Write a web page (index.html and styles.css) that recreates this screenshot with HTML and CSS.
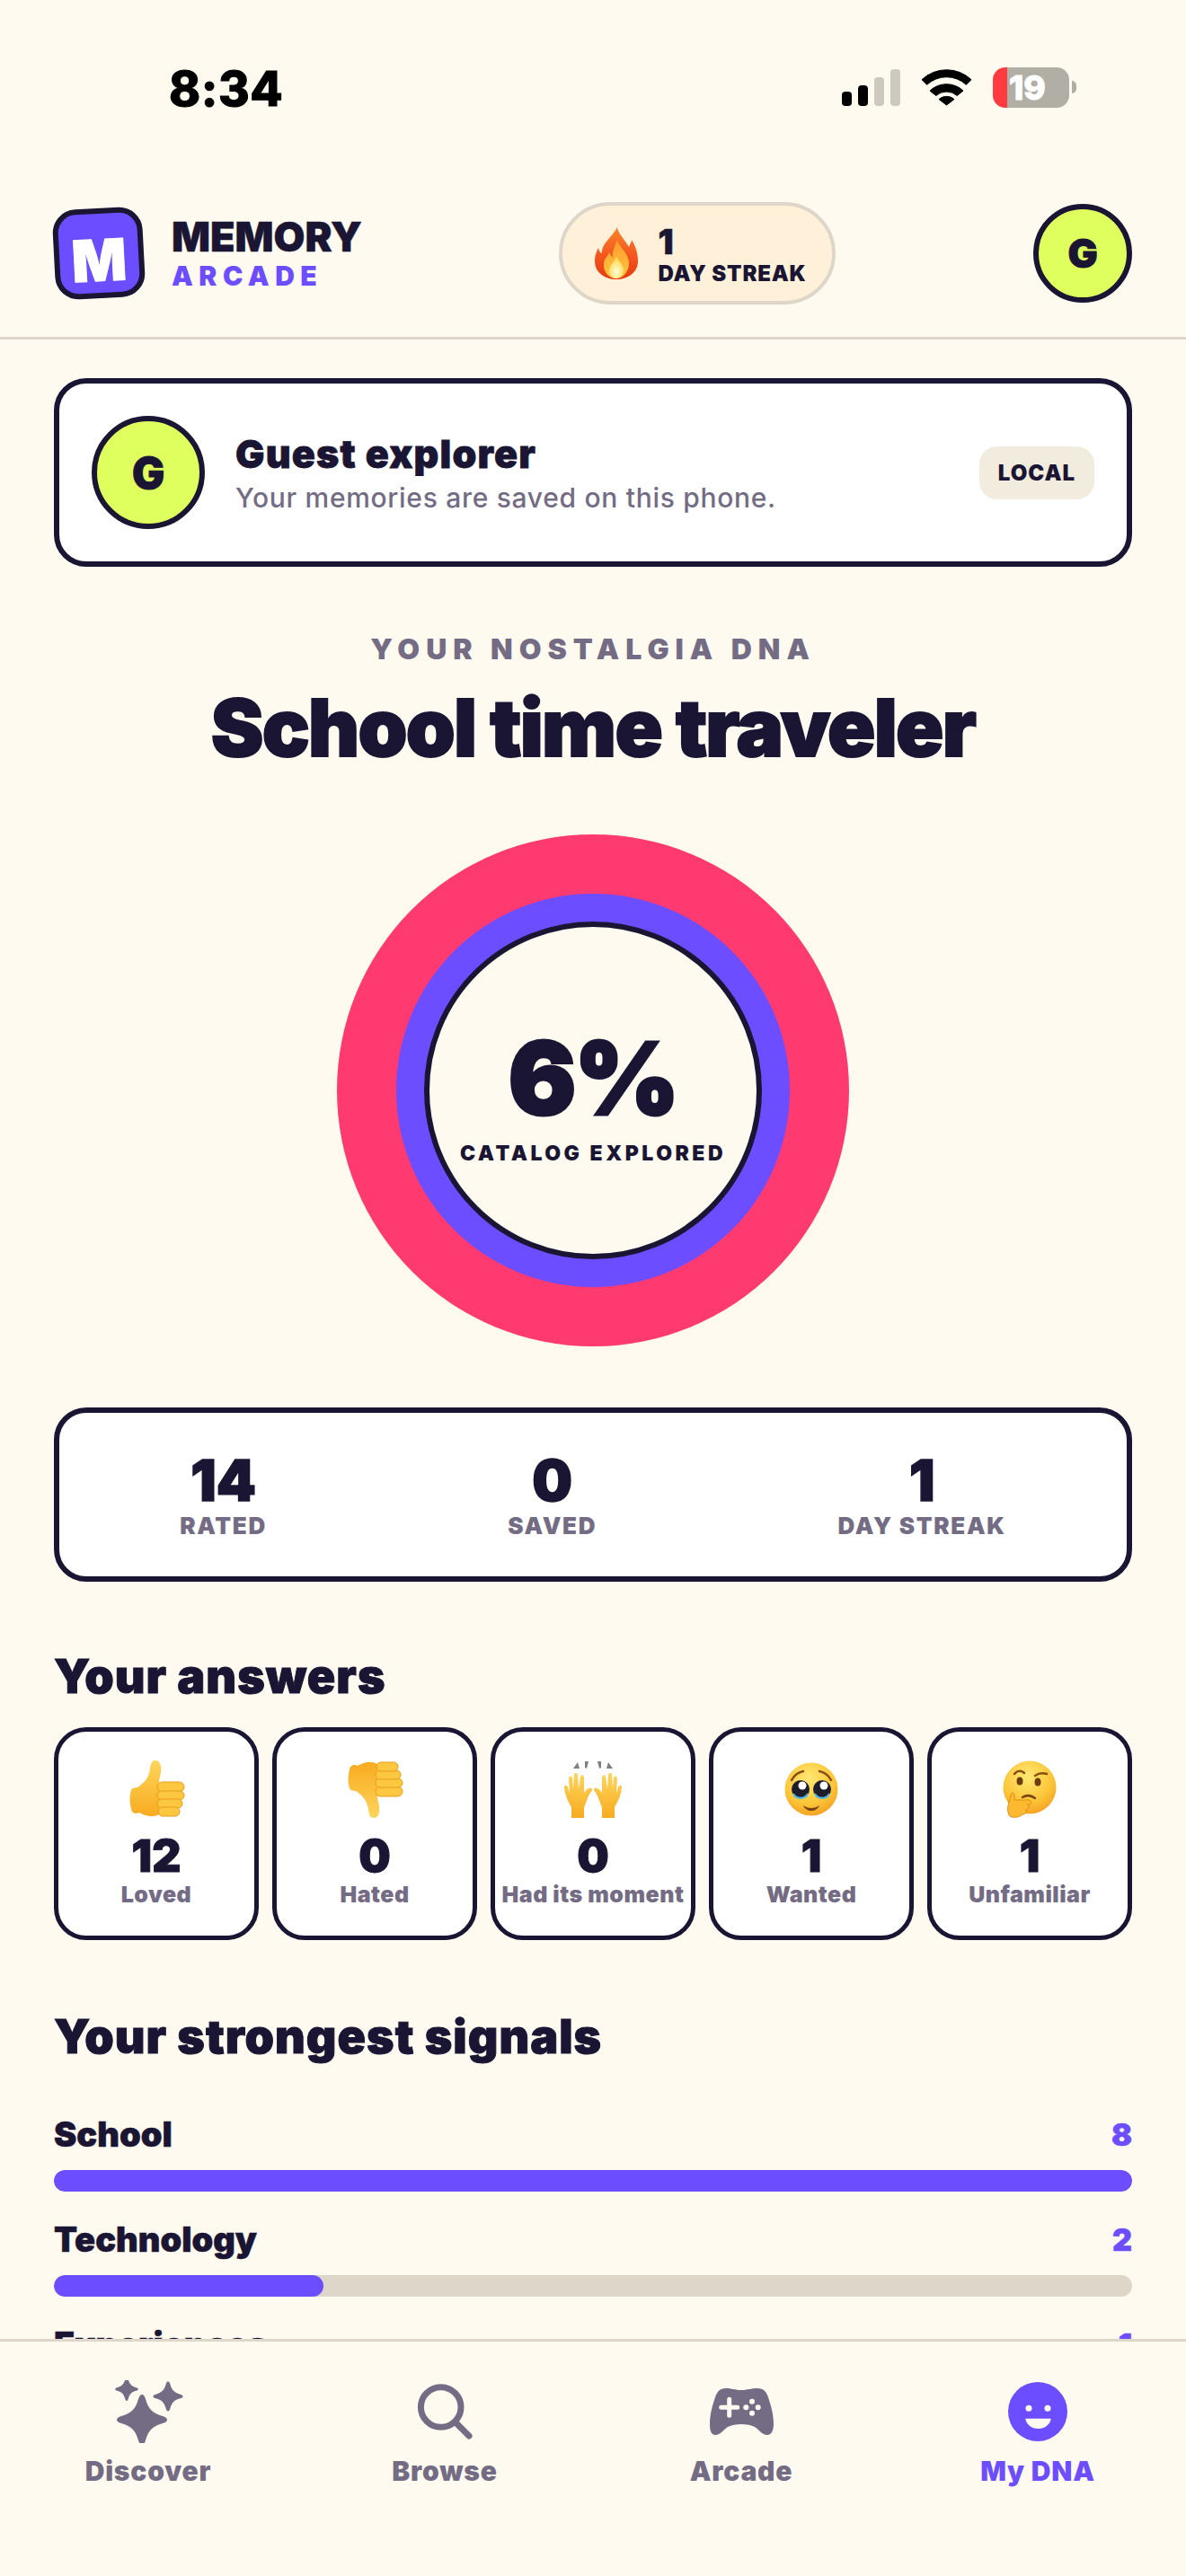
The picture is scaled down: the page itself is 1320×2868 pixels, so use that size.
FILE: index.html
```html
<!DOCTYPE html>
<html lang="en">
<head>
  <meta charset="UTF-8" />
  <meta name="viewport" content="width=device-width, initial-scale=1" />
  <title>Memory Arcade - My DNA</title>
  <link rel="stylesheet" href="styles.css">
</head>
<body>
  <svg class="defs" aria-hidden="true">
    <defs>
      <linearGradient id="skin" x1="0" y1="0" x2="0" y2="1">
        <stop offset="0" stop-color="#ffd55c"/>
        <stop offset="1" stop-color="#f7ab1f"/>
      </linearGradient>
      <radialGradient id="face" cx="0.45" cy="0.3" r="0.8">
        <stop offset="0" stop-color="#ffe873"/>
        <stop offset="0.6" stop-color="#fcc537"/>
        <stop offset="1" stop-color="#f3941c"/>
      </radialGradient>
      <linearGradient id="flame" x1="0" y1="0" x2="0" y2="1">
        <stop offset="0" stop-color="#f9852a"/>
        <stop offset="0.6" stop-color="#f4511e"/>
        <stop offset="1" stop-color="#e8380f"/>
      </linearGradient>
      <linearGradient id="flameIn" x1="0" y1="0" x2="0" y2="1">
        <stop offset="0" stop-color="#ff9a2e"/>
        <stop offset="1" stop-color="#ffc83c"/>
      </linearGradient>
      <radialGradient id="flameCore" cx="0.5" cy="0.7" r="0.6">
        <stop offset="0" stop-color="#fffde0"/>
        <stop offset="1" stop-color="#ffd94a"/>
      </radialGradient>
      <g id="thumb">
        <path fill="url(#skin)" d="M31 0C36 0 38 6 37 13C36 18 35 22 35 25L35 60C28 64 20 62 13 58C9 60 5 59 4 54C2 46 2 39 4 33C5 31 7 30 11 30C17 26 24 20 25 9C26 3 27 0 31 0Z"/>
        <g fill="#fdc83f" stroke="#e99a1a" stroke-width="1">
          <rect x="33" y="24" width="30" height="11" rx="5.5"/>
          <rect x="33" y="34" width="30" height="10" rx="5"/>
          <rect x="33" y="43" width="28" height="10" rx="5"/>
          <rect x="34" y="52" width="24" height="10" rx="5"/>
        </g>
      </g>
    </defs>
  </svg>

  <div class="phone">
    <div class="statusbar">
      <div class="time">8:34</div>
      <div class="status-icons">
        <svg class="signal" width="65" height="41" viewBox="0 0 65 41">
          <rect x="0" y="25" width="11" height="16" rx="4" fill="#000"/>
          <rect x="18" y="18" width="11" height="23" rx="4" fill="#000"/>
          <rect x="36" y="9" width="11" height="32" rx="4" fill="#cdc9c0"/>
          <rect x="54" y="0" width="11" height="41" rx="4" fill="#cdc9c0"/>
        </svg>
        <svg class="wifi" width="57" height="42" viewBox="0 0 57 42">
          <g fill="#000" stroke="#000" stroke-width="1" stroke-linejoin="round">
            <path d="M1 12.7A40 40 0 0 1 56 12.7L50.3 18.3A32 32 0 0 0 6.7 18.3Z"/>
            <path d="M10 25A27 27 0 0 1 47 25L40.3 30.5A18 18 0 0 0 16.7 30.5Z"/>
            <path d="M20 34.5A13 13 0 0 1 37 34.5L28.5 41Z"/>
          </g>
        </svg>
        <div class="battery">
          <div class="battery-body">19</div>
          <div class="battery-nub"></div>
        </div>
      </div>
    </div>

    <header class="topbar">
      <div class="brand">
        <div class="logo"><span>M</span></div>
        <div class="brand-text">
          <div class="brand-name">MEMORY</div>
          <div class="brand-sub">ARCADE</div>
        </div>
      </div>
      <div class="streak-pill">
        <svg class="fire" width="48" height="58" viewBox="0 0 48 58">
          <path fill="url(#flame)" d="M25 0C27 9 33 13 38 22C40 17 41 16 41 14C46 22 48 30 48 38C48 50 37 58 24 58C11 58 0 50 0 38C0 31 2 27 4 23C5 27 6 28 8 29C7 18 19 12 25 0Z"/>
          <path fill="url(#flameIn)" d="M25 14C27 22 36 27 38 38C39 48 32 57 24 57C15 57 9 49 10 40C11 34 14 33 16 28C18 32 19 33 20 33C19 26 23 20 25 14Z"/>
          <path fill="url(#flameCore)" d="M24 32C26 38 32 41 32 48C32 53 28 57 24 57C19 57 16 53 16 48C16 42 22 39 24 32Z"/>
        </svg>
        <div class="streak-text">
          <div class="streak-num">1</div>
          <div class="streak-label">DAY STREAK</div>
        </div>
      </div>
      <div class="avatar avatar-small">G</div>
    </header>

    <main class="content">
      <section class="guest-card">
        <div class="avatar avatar-large">G</div>
        <div class="guest-text">
          <div class="guest-name">Guest explorer</div>
          <div class="guest-sub">Your memories are saved on this phone.</div>
        </div>
        <div class="local-chip">LOCAL</div>
      </section>

      <div class="eyebrow">YOUR NOSTALGIA DNA</div>
      <h1 class="dna-title">School time traveler</h1>

      <div class="donut">
        <div class="donut-mid">
          <div class="donut-core">
            <div class="donut-pct">6%</div>
            <div class="donut-label">CATALOG EXPLORED</div>
          </div>
        </div>
      </div>

      <section class="stats-card">
        <div class="stat"><div class="stat-num">14</div><div class="stat-label">RATED</div></div>
        <div class="stat"><div class="stat-num">0</div><div class="stat-label">SAVED</div></div>
        <div class="stat"><div class="stat-num">1</div><div class="stat-label">DAY STREAK</div></div>
      </section>

      <h2 class="section-title answers-title">Your answers</h2>
      <section class="answers">
        <div class="answer">
          <svg class="emoji" width="64" height="64" viewBox="0 0 64 64">
            <use href="#thumb"/>
          </svg>
          <div class="answer-num">12</div>
          <div class="answer-label">Loved</div>
        </div>
        <div class="answer">
          <svg class="emoji" width="64" height="64" viewBox="0 0 64 64">
            <use href="#thumb" transform="matrix(1 0 0 -1 0 64)"/>
          </svg>
          <div class="answer-num">0</div>
          <div class="answer-label">Hated</div>
        </div>
        <div class="answer">
          <svg class="emoji" width="70" height="64" viewBox="0 0 70 64">
            <g fill="#7f7f7f">
              <path d="M13 9L20 9L18 2Z"/><path d="M26 1L30 1L28 9L26 8Z"/>
              <path d="M40 1L44 1L44 8L42 9Z"/><path d="M50 9L57 9L52 2Z"/>
            </g>
            <g fill="url(#skin)">
              <path id="hand" d="M11 64L11 52C8 47 4 40 3 30C2.500 27 6 27 7 30L9 37L8 20C8 17 12 17 12 20L13 32L14 16C14 13 18 13 18 16L19 32L21 18C21 15 25 16 25 19L25 36C27 33 30 30 33 31C35 32 34 34 32 36C29 40 28 46 25 52L25 64Z"/>
              <use href="#hand" transform="matrix(-1 0 0 1 70 0)"/>
            </g>
          </svg>
          <div class="answer-num">0</div>
          <div class="answer-label">Had its moment</div>
        </div>
        <div class="answer">
          <svg class="emoji" width="64" height="64" viewBox="0 0 64 64">
            <circle cx="32" cy="32" r="29.500" fill="url(#face)"/>
            <path d="M10 22C13 16 18 13 23 12M54 22C51 16 46 13 41 12" fill="none" stroke="#8a4f10" stroke-width="2.500" stroke-linecap="round"/>
            <circle cx="20" cy="32" r="10" fill="#1d1d2b"/>
            <circle cx="44" cy="32" r="10" fill="#1d1d2b"/>
            <circle cx="22" cy="28" r="4.500" fill="#fff"/>
            <circle cx="46" cy="28" r="4.500" fill="#fff"/>
            <path d="M12 37C16 43 24 43 28 37C27 44 13 44 12 37ZM36 37C40 43 48 43 52 37C51 44 37 44 36 37Z" fill="#4cb3ea" stroke="#4cb3ea" stroke-width="1.500"/>
            <path d="M23 50C28 54 36 54 41 50C38 58 26 58 23 50Z" fill="#7a4410"/>
          </svg>
          <div class="answer-num">1</div>
          <div class="answer-label">Wanted</div>
        </div>
        <div class="answer">
          <svg class="emoji" width="64" height="64" viewBox="0 0 64 64">
            <circle cx="32" cy="30" r="29.500" fill="url(#face)"/>
            <path d="M15 15C18 11 23 11 26 14M38 17C42 14 47 14 51 15" fill="none" stroke="#8a4f10" stroke-width="2.500" stroke-linecap="round"/>
            <ellipse cx="21" cy="23" rx="3.500" ry="4.500" fill="#6d3c0c"/>
            <ellipse cx="41" cy="24" rx="3.500" ry="4.500" fill="#6d3c0c"/>
            <path d="M24 41C29 38 34 39 38 42" fill="none" stroke="#7a4410" stroke-width="2.500" stroke-linecap="round"/>
            <path fill="#fdb92f" stroke="#e08d14" stroke-width="1" d="M10 62C7 58 7 52 9 47L11 38C12 35 15 36 15 39L15 44L30 44C35 44 35 49 31 49L29 49C32 50 32 54 28 55C29 58 27 60 24 60C20 64 13 64 10 62Z"/>
          </svg>
          <div class="answer-num">1</div>
          <div class="answer-label">Unfamiliar</div>
        </div>
      </section>

      <h2 class="section-title signals-title">Your strongest signals</h2>
      <section class="signals">
        <div class="signal-row">
          <div class="signal-head"><span class="signal-name">School</span><span class="signal-val">8</span></div>
          <div class="track"><div class="fill" style="width:100%"></div></div>
        </div>
        <div class="signal-row">
          <div class="signal-head"><span class="signal-name">Technology</span><span class="signal-val">2</span></div>
          <div class="track"><div class="fill" style="width:25%"></div></div>
        </div>
        <div class="signal-row">
          <div class="signal-head"><span class="signal-name">Experiences</span><span class="signal-val">1</span></div>
          <div class="track"><div class="fill" style="width:12.5%"></div></div>
        </div>
      </section>
    </main>

    <nav class="tabbar">
      <div class="tab">
        <svg class="tab-icon" width="80" height="70" viewBox="0 0 80 70">
          <defs>
            <path id="star" d="M0-28C2-28 3-26 4-23C7-12 12-7 23-4C26-3 28-2 28 0C28 2 26 3 23 4C12 7 7 12 4 23C3 26 2 28 0 28C-2 28-3 26-4 23C-7 12-12 7-23 4C-26 3-28 2-28 0C-28-2-26-3-23-4C-12-7-7-12-4-23C-3-26-2-28 0-28Z"/>
          </defs>
          <use href="#star" transform="translate(33 44)"/>
          <use href="#star" transform="translate(16 10) scale(.46)"/>
          <use href="#star" transform="translate(62 18) scale(.59)"/>
        </svg>
        <div class="tab-label">Discover</div>
      </div>
      <div class="tab">
        <svg class="tab-icon" width="80" height="70" viewBox="0 0 80 70">
          <circle cx="35.700" cy="30" r="22.300" fill="none" stroke="currentColor" stroke-width="7"/>
          <path d="M52 47L67 62" fill="none" stroke="currentColor" stroke-width="7" stroke-linecap="round"/>
        </svg>
        <div class="tab-label">Browse</div>
      </div>
      <div class="tab">
        <svg class="tab-icon" width="80" height="70" viewBox="0 0 80 70">
          <path d="M23 9C29 9 33 11 40 11C47 11 51 9 58 9C65 9 68 13 70 19C73 28 76 38 76 49C76 57 73 61 69 61C63 61 60 55 55 52C51 50 46 49 40 49C34 49 29 50 25 52C20 55 17 61 11 61C7 61 5 57 5 49C5 38 8 28 11 19C13 13 16 9 23 9Z"/>
          <path d="M17.700 30.300H35.700M26.700 21.300V39.300" fill="none" stroke="#fffaef" stroke-width="5" stroke-linecap="round"/>
          <g fill="#fffaef">
            <circle cx="52" cy="23.700" r="3"/><circle cx="45.300" cy="30.300" r="3"/>
            <circle cx="58.700" cy="30.300" r="3"/><circle cx="52" cy="36.700" r="3"/>
          </g>
        </svg>
        <div class="tab-label">Arcade</div>
      </div>
      <div class="tab tab-active">
        <svg class="tab-icon" width="80" height="70" viewBox="0 0 80 70">
          <circle cx="40" cy="35" r="33"/>
          <circle cx="30" cy="31.300" r="3.500" fill="#fffaef"/>
          <circle cx="51" cy="31.300" r="3.500" fill="#fffaef"/>
          <path d="M26.300 42.700H54.700C54 49 48 54 40.500 54C33 54 27 49 26.300 42.700Z" fill="#fffaef"/>
        </svg>
        <div class="tab-label">My DNA</div>
      </div>
    </nav>
  </div>
</body>
</html>
```

FILE: styles.css
```css
* { box-sizing: border-box; }
html, body {
  margin: 0; padding: 0;
  background-color: #fffaef;
}
body {
  color: #1a1533;
  font-family: Inter, 'Liberation Sans', sans-serif;
}
.defs { display: block; width: 0; height: 0; }
.phone {
  width: 1320px;
  height: 2868px;
  display: flex;
  flex-direction: column;
  overflow: hidden;
}

/* status bar */
.statusbar {
  height: 188px;
  flex: none;
  padding: 72px 122px 0 188px;
  display: flex;
  justify-content: space-between;
  align-items: flex-start;
}
.time {
  margin-top: 2px;
  font-size: 53px;
  line-height: 50px;
  font-weight: 800;
  letter-spacing: 0.5px;
  -webkit-text-stroke: 1px;
  color: #000;
}
.status-icons {
  display: flex;
  align-items: center;
  gap: 23px;
  height: 50px;
}
.battery { display: flex; align-items: center; gap: 3px; }
.battery-body {
  width: 85px;
  height: 45px;
  border-radius: 14px;
  background: linear-gradient(90deg, #ff3b3f 16px, #b1aea6 16px);
  color: #fff;
  font-size: 37px;
  font-weight: 800;
  line-height: 45px;
  padding-left: 18px;
  -webkit-text-stroke: 1px;
}
.battery-nub {
  width: 5px;
  height: 14px;
  border-radius: 0 5px 5px 0;
  background-color: #b1aea6;
}

/* header */
.topbar {
  height: 190px;
  flex: none;
  padding: 0 60px;
  display: flex;
  justify-content: space-between;
  align-items: center;
  border-bottom: 3px solid #ded6c8;
}
.brand { display: flex; align-items: center; gap: 31px; }
.logo {
  width: 100px;
  height: 100px;
  border: 6px solid #1a1533;
  border-radius: 26px;
  background-color: #6c4dff;
  transform: rotate(-3deg);
  display: flex;
  align-items: center;
  justify-content: center;
  color: #fff;
  font-size: 64px;
  font-weight: 900;
  -webkit-text-stroke: 1px;
}
.logo span { position: relative; top: 7px; }
.brand-name {
  font-size: 45px;
  line-height: 50px;
  font-weight: 900;
  -webkit-text-stroke: 0.5px;
}
.brand-sub {
  font-size: 30px;
  line-height: 36px;
  font-weight: 900;
  letter-spacing: 6.5px;
  color: #6c4dff;
}
.streak-pill {
  width: 308px;
  height: 114px;
  padding-left: 36px;
  display: flex;
  align-items: center;
  gap: 22px;
  background-color: #fff1d9;
  border: 4px solid #ded6c8;
  border-radius: 57px;
}
.streak-text { margin-top: 5px; }
.streak-num {
  font-size: 38px;
  line-height: 42px;
  font-weight: 900;
  -webkit-text-stroke: 0.5px;
}
.streak-label {
  font-size: 24px;
  line-height: 30px;
  font-weight: 900;
  letter-spacing: 0.8px;
}
.avatar {
  flex: none;
  display: flex;
  align-items: center;
  justify-content: center;
  background-color: #dfff5f;
  border-radius: 50%;
  font-weight: 900;
  -webkit-text-stroke: 1px;
}
.avatar-small {
  width: 110px;
  height: 110px;
  border: 6px solid #1a1533;
  font-size: 44px;
}
.avatar-large {
  width: 126px;
  height: 126px;
  border: 6px solid #1a1533;
  font-size: 48px;
}

/* main column */
.content {
  flex: 1;
  min-height: 0;
  overflow: hidden;
  padding: 43px 60px 0;
}
.guest-card {
  height: 210px;
  padding: 0 36px 0 36px;
  display: flex;
  align-items: center;
  background-color: #fff;
  border: 6px solid #1a1533;
  border-radius: 36px;
}
.guest-text { flex: 1; margin-left: 34px; }
.guest-name {
  font-size: 43px;
  line-height: 50px;
  font-weight: 900;
  letter-spacing: 1.2px;
  -webkit-text-stroke: 0.8px;
}
.guest-sub {
  margin-top: 5px;
  font-size: 30px;
  line-height: 38px;
  font-weight: 500;
  letter-spacing: 0.7px;
  color: #746c84;
}
.local-chip {
  width: 128px;
  height: 59px;
  display: flex;
  align-items: center;
  justify-content: center;
  background-color: #f2ecdf;
  border-radius: 20px;
  font-size: 24px;
  font-weight: 900;
  letter-spacing: 1px;
}
.eyebrow {
  margin-top: 72px;
  text-align: center;
  font-size: 32px;
  line-height: 40px;
  font-weight: 900;
  letter-spacing: 7px;
  color: #746c84;
}
.dna-title {
  margin: 17px 0 0;
  text-align: center;
  font-size: 88px;
  line-height: 100px;
  font-weight: 900;
  letter-spacing: -1.7px;
  -webkit-text-stroke: 2px;
}
.donut {
  width: 570px;
  height: 570px;
  margin: 69px auto 0;
  border-radius: 50%;
  background-color: #ff3a70;
  display: flex;
  align-items: center;
  justify-content: center;
}
.donut-mid {
  width: 438px;
  height: 438px;
  border-radius: 50%;
  background-color: #6c4dff;
  display: flex;
  align-items: center;
  justify-content: center;
}
.donut-core {
  width: 376px;
  height: 376px;
  padding-top: 19px;
  border-radius: 50%;
  border: 6px solid #1a1533;
  background-color: #fffaef;
  display: flex;
  flex-direction: column;
  align-items: center;
  justify-content: center;
}
.donut-pct {
  font-size: 112px;
  line-height: 100px;
  font-weight: 900;
  letter-spacing: -2px;
  -webkit-text-stroke: 3px;
}
.donut-label {
  margin-top: 21px;
  font-size: 23px;
  line-height: 26px;
  font-weight: 900;
  letter-spacing: 3.5px;
}
.stats-card {
  height: 194px;
  margin-top: 68px;
  display: flex;
  justify-content: space-around;
  align-items: center;
  background-color: #fff;
  border: 6px solid #1a1533;
  border-radius: 36px;
}
.stat { text-align: center; }
.stat-num {
  font-size: 63px;
  line-height: 70px;
  font-weight: 900;
  -webkit-text-stroke: 1.5px;
}
.stat-label {
  font-size: 26px;
  line-height: 32px;
  font-weight: 900;
  letter-spacing: 1.7px;
  color: #746c84;
}
.section-title {
  margin: 0;
  font-size: 52px;
  line-height: 60px;
  font-weight: 900;
  letter-spacing: 1px;
  -webkit-text-stroke: 1px;
}
.answers-title { margin-top: 76px; }
.answers {
  margin-top: 26px;
  display: grid;
  grid-template-columns: repeat(5, 1fr);
  gap: 15px;
}
.answer {
  height: 237px;
  padding-top: 32px;
  display: flex;
  flex-direction: column;
  align-items: center;
  background-color: #fff;
  border: 5px solid #1a1533;
  border-radius: 36px;
}
.answer-num {
  margin-top: 14px;
  font-size: 50px;
  line-height: 56px;
  font-weight: 900;
  -webkit-text-stroke: 1px;
}
.answer-label {
  margin-top: 0;
  font-size: 25px;
  line-height: 30px;
  font-weight: 900;
  color: #746c84;
  white-space: nowrap;
  letter-spacing: 0.5px;
}
.signals-title { margin-top: 78px; }
.signals { margin-top: 56px; }
.signal-row { margin-bottom: 31px; }
.signal-head {
  display: flex;
  justify-content: space-between;
  align-items: center;
  height: 44px;
}
.signal-name {
  font-size: 38px;
  font-weight: 900;
  -webkit-text-stroke: 0.6px;
}
.signal-val {
  font-size: 34px;
  font-weight: 900;
  color: #6c4dff;
  -webkit-text-stroke: 0.6px;
}
.track {
  height: 24px;
  margin-top: 18px;
  background-color: #ded6c8;
  border-radius: 12px;
  overflow: hidden;
}
.fill {
  height: 100%;
  background-color: #6c4dff;
  border-radius: 12px;
}

/* bottom tabs */
.tabbar {
  height: 264px;
  flex: none;
  display: flex;
  background-color: #fffaef;
  border-top: 3px solid #ded6c8;
}
.tab {
  flex: 1;
  padding-top: 43px;
  display: flex;
  flex-direction: column;
  align-items: center;
  gap: 13px;
  color: #746c84;
}
.tab-icon { fill: currentColor; }
.tab-label {
  font-size: 30px;
  line-height: 36px;
  font-weight: 900;
  letter-spacing: 0.8px;
}
.tab-active { color: #6c4dff; }
```
